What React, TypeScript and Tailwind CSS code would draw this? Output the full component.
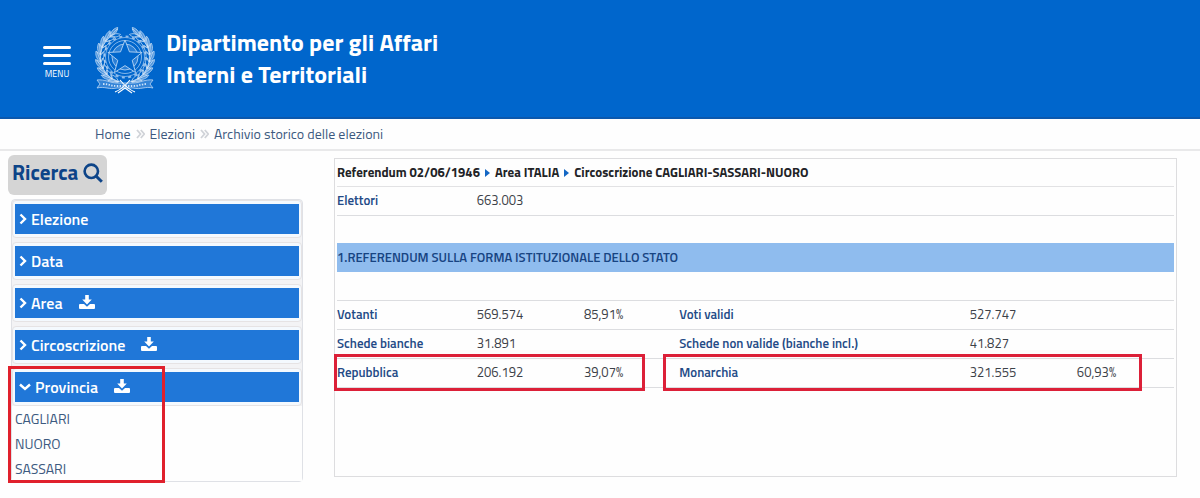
import React, { useState } from "react";

const LEAVES = [112, 128, 144, 160, 176, 192, 208, 224, 240];

function starPoints(cx: number, cy: number, outer: number, inner: number) {
  return Array.from({ length: 10 }, (_, i) => {
    const r = i % 2 === 0 ? outer : inner;
    const a = ((-90 + i * 36) * Math.PI) / 180;
    return `${(cx + r * Math.cos(a)).toFixed(2)},${(cy + r * Math.sin(a)).toFixed(2)}`;
  }).join(" ");
}

function Branch() {
  return (
    <g fill="none" stroke="#c4dcf5" strokeWidth="0.7">
      <path d="M26 56C12 53 5 43 5 31C5 18 12 8 23 3" />
      {LEAVES.map((deg) => {
        const a = (deg * Math.PI) / 180;
        const x = 30 + 24.5 * Math.cos(a);
        const y = 31 + 25.5 * Math.sin(a);
        return (
          <g key={deg} transform={`translate(${x.toFixed(2)} ${y.toFixed(2)}) rotate(${deg + 90})`}>
            <path d="M-3 0C0 -4.5 5 -5 8 -4C6 -1 3 1 -3 0Z" fill="#4f96de" />
            <path d="M-3 0C0 3.5 4 4.5 7 3.5C5 1 2 -1 -3 0Z" />
            <path d="M-3 0L7 -3" stroke="#ffffff" strokeWidth="0.5" />
          </g>
        );
      })}
    </g>
  );
}

function Emblem() {
  return (
    <svg viewBox="0 0 60 68" className="h-[68px] w-[60px] shrink-0" aria-hidden="true">
      <circle cx="30" cy="31" r="16.5" fill="none" stroke="#8fbdec" strokeWidth="0.9" />
      <circle cx="30" cy="31" r="19.5" fill="none" stroke="#8fbdec" strokeWidth="0.8" />
      <circle cx="30" cy="31" r="20.5" fill="none" stroke="#8fbdec" strokeWidth="2" strokeDasharray="3 3.44" />
      <circle cx="30" cy="31" r="13" fill="#2a7fd6" stroke="#a9cdf2" strokeWidth="0.9" />
      <Branch />
      <g transform="translate(60 0) scale(-1 1)">
        <Branch />
      </g>
      <polygon points={starPoints(30, 32, 18, 7.6)} fill="#0066cc" stroke="#b9d6f4" strokeWidth="0.9" />
      <path
        d="M2 54C10 53 15 57 22 57H38C45 57 50 53 58 54L55 58L58 62C50 60 46 64 38 62H22C14 64 10 60 2 62L5 58Z"
        fill="#3585d8"
        stroke="#b9d6f4"
        strokeWidth="0.8"
      />
      <path d="M8 58C14 58 16 60 22 60H38C44 60 46 58 52 58" fill="none" stroke="#cfe3f8" strokeWidth="1.8" strokeDasharray="1.4 1.4" />
      <path d="M20 66C25 64 31 59 35 54M40 66C35 64 29 59 25 54M23 67L30 62L37 67" fill="none" stroke="#ffffff" strokeWidth="1.1" />
    </svg>
  );
}

function Chevron({ open }: { open: boolean }) {
  return (
    <svg
      viewBox={open ? "0 0 12 12" : "0 0 8 12"}
      className={open ? "h-3 w-3 shrink-0" : "h-3 w-2 shrink-0"}
      fill="none"
      stroke="currentColor"
      strokeWidth="2.4"
      aria-hidden="true"
    >
      <path d={open ? "M1 3.5L6 8L11 3.5" : "M1.5 1.5L6 6L1.5 10.5"} />
    </svg>
  );
}

function DownloadIcon() {
  return (
    <svg viewBox="0 0 16 16" className="ml-4 h-4 w-4 shrink-0" fill="currentColor" aria-hidden="true">
      <path d="M6.2 0H9.8V4.6H12.8L8 9.4L3.2 4.6H6.2Z" />
      <path d="M1 9H5L8 11.8L11 9H15Q16 9 16 10V13Q16 14 15 14H1Q0 14 0 13V10Q0 9 1 9Z" />
    </svg>
  );
}

function CrumbArrow() {
  return (
    <svg viewBox="0 0 9 10" className="h-2.5 w-[9px] shrink-0" fill="none" stroke="#d0d3d8" strokeWidth="1.8" aria-hidden="true">
      <path d="M1 1L4.5 5L1 9M4.8 1L8.3 5L4.8 9" />
    </svg>
  );
}

function PathArrow() {
  return (
    <svg viewBox="0 0 5 8" className="h-2 w-[5px] shrink-0" fill="#1467c4" aria-hidden="true">
      <path d="M0 0L5 4L0 8Z" />
    </svg>
  );
}

const SECTIONS = [
  { name: "Elezione", download: false },
  { name: "Data", download: false },
  { name: "Area", download: true },
  { name: "Circoscrizione", download: true },
  { name: "Provincia", download: true },
];

const PROVINCES = ["CAGLIARI", "NUORO", "SASSARI"];

const ROWS = [
  ["Votanti", "569.574", "85,91%", "Voti validi", "527.747", ""],
  ["Schede bianche", "31.891", "", "Schede non valide (bianche incl.)", "41.827", ""],
  ["Repubblica", "206.192", "39,07%", "Monarchia", "321.555", "60,93%"],
];

const CRUMBS = ["Home", "Elezioni", "Archivio storico delle elezioni"];

function Header() {
  return (
    <header className="flex h-[119px] items-start border-b-2 border-[#0b58ad] bg-[#0066cc] pl-[43px] text-white">
      <button type="button" className="mt-[46px] flex w-7 flex-col items-center">
        <span className="flex w-full flex-col gap-[5px]">
          <span className="h-[3px] rounded-sm bg-white" />
          <span className="h-[3px] rounded-sm bg-white" />
          <span className="h-[3px] rounded-sm bg-white" />
        </span>
        <span className="mt-[3px] text-[9px] leading-3">MENU</span>
      </button>
      <div className="mt-[26px] ml-6 flex items-start gap-[11px]">
        <Emblem />
        <h1 className="text-2xl leading-8 font-bold">
          Dipartimento per gli Affari
          <br />
          Interni e Territoriali
        </h1>
      </div>
    </header>
  );
}

function Sidebar() {
  const [open, setOpen] = useState("Provincia");
  return (
    <aside className="w-[295px] shrink-0">
      <button
        type="button"
        className="flex h-10 items-center gap-[5px] rounded-md bg-[#d5d5d5] px-1 pb-1 text-[21px] font-bold text-[#0d4488]"
      >
        Ricerca
        <svg viewBox="0 0 20 20" className="h-5 w-5" fill="none" stroke="currentColor" strokeWidth="2.6" aria-hidden="true">
          <circle cx="8.3" cy="8.3" r="6.7" />
          <path d="M13 13L18.8 18.8" strokeWidth="3" />
        </svg>
      </button>
      <div className="relative mt-1 ml-[3px] flex flex-col gap-1 rounded-sm border border-[#dfe1e6] bg-[#f3f3f5]">
        {SECTIONS.map((s) => {
          const isOpen = s.name === open;
          return (
            <div key={s.name}>
              <div className="rounded-sm border border-[#e6e3e4] bg-[#f4f9fe] px-0.5 py-[3px]">
                <button
                  type="button"
                  aria-expanded={isOpen}
                  onClick={() => setOpen(isOpen ? "" : s.name)}
                  className="flex h-[30px] w-full items-center bg-[#2077d8] pl-1 text-left text-base font-semibold text-white"
                >
                  <Chevron open={isOpen} />
                  <span className="ml-1">{s.name}</span>
                  {s.download && <DownloadIcon />}
                </button>
              </div>
              {isOpen && (
                <ul className="bg-[#fefefe] pl-[3px] text-sm leading-[25px] text-[#3d5a80]">
                  {PROVINCES.map((p) => (
                    <li key={p}>
                      <a href="#provincia">{p}</a>
                    </li>
                  ))}
                </ul>
              )}
            </div>
          );
        })}
        <div className="pointer-events-none absolute -bottom-0.5 -left-1 h-[117px] w-[157px] border-[3px] border-[#e0202c]" />
      </div>
    </aside>
  );
}

function Results() {
  return (
    <section className="mt-[3px] min-w-0 flex-1 border border-[#dddddf] text-[13px] text-[#3c4148]">
      <h2 className="mx-0.5 flex h-7 items-center gap-[5px] border-b border-[#e2e2e4] font-bold text-[#222326]">
        Referendum 02/06/1946
        <PathArrow />
        Area ITALIA
        <PathArrow />
        Circoscrizione CAGLIARI-SASSARI-NUORO
      </h2>
      <div className="relative mb-[88px]">
        <div className="mx-0.5">
          <table className="w-full table-fixed text-left">
            <colgroup>
              <col className="w-[16.7%]" />
              <col className="w-[12.8%]" />
              <col className="w-[11.4%]" />
              <col className="w-[34.7%]" />
              <col className="w-[12.8%]" />
              <col />
            </colgroup>
            <tbody>
              <tr className="h-7 border-b border-[#dcdde0]">
                <th scope="row" className="p-0 font-semibold text-[#234a86]">Elettori</th>
                <td colSpan={5} className="p-0">663.003</td>
              </tr>
              <tr className="h-7">
                <td colSpan={6} className="p-0" />
              </tr>
              <tr className="h-[29px] bg-[#8fbcee]">
                <th colSpan={6} className="p-0 font-semibold text-[#174482]">
                  1.REFERENDUM SULLA FORMA ISTITUZIONALE DELLO STATO
                </th>
              </tr>
              <tr className="h-7 border-b border-[#dcdde0]">
                <td colSpan={6} className="p-0" />
              </tr>
              {ROWS.map((row) => (
                <tr key={row[0]} className="h-[29px] border-b border-[#dcdde0]">
                  {row.map((cell, i) =>
                    i % 3 === 0 ? (
                      <th key={i} scope="row" className="p-0 font-semibold whitespace-nowrap text-[#234a86]">{cell}</th>
                    ) : (
                      <td key={i} className="p-0">{cell}</td>
                    )
                  )}
                </tr>
              ))}
            </tbody>
          </table>
        </div>
        <div className="pointer-events-none absolute -bottom-[3px] -left-px h-[37px] w-[37%] border-[3px] border-[#dc2038]" />
        <div className="pointer-events-none absolute -bottom-[3px] left-[39%] h-[37px] w-[57%] border-[3px] border-[#dc2038]" />
      </div>
    </section>
  );
}

export default function App() {
  return (
    <div className="min-h-screen bg-[#fefefe] font-['Titillium_Web','Roboto',sans-serif]">
      <Header />
      <nav aria-label="Breadcrumb" className="flex h-8 items-center gap-[5px] border-b-2 border-[#e9e9ea] pl-[95px] text-sm text-[#3d5a80]">
        {CRUMBS.map((c, i) => (
          <React.Fragment key={c}>
            {i > 0 && <CrumbArrow />}
            <a href="#archivio">{c}</a>
          </React.Fragment>
        ))}
      </nav>
      <main className="flex items-start gap-[31px] pt-1 pr-[23px] pl-2">
        <Sidebar />
        <Results />
      </main>
    </div>
  );
}
